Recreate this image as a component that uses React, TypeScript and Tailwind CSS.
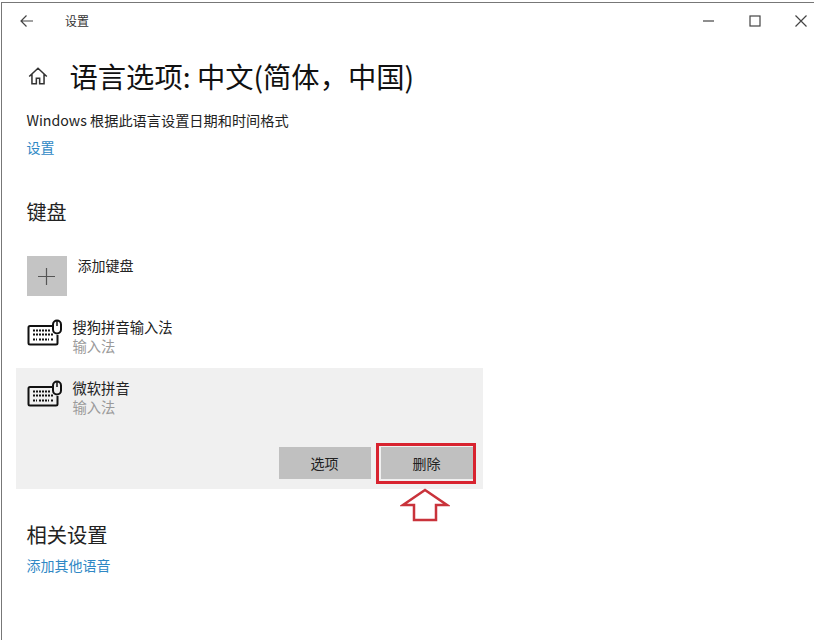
const font = "font-['Noto_Sans_CJK_SC','Noto_Sans',sans-serif]";

function KeyboardIcon() {
  return (
    <svg width="36" height="28" viewBox="0 0 36 28" fill="none" stroke="#111" strokeWidth="2">
      <path d="M25 7H3a1.500 1.500 0 0 0-1.500 1.500V24a1.500 1.500 0 0 0 1.500 1.500h26a1.500 1.500 0 0 0 1.500-1.500v-8" />
      <rect x="26" y="1.500" width="8" height="13" rx="4" />
      <path d="M30 2v5" strokeWidth="1.500" />
      <path d="M6 11.500h17M6 15.500h21M6 20.500h4M12 20.500h10M24 20.500h3" strokeWidth="2" strokeDasharray="2 1" />
    </svg>
  );
}

function ImeRow({ name, selected }: { name: string; selected?: boolean }) {
  return (
    <div className={selected ? "h-[121px] -ml-[11px] w-[467px] pl-[11px] bg-[#f0f0f0]" : "h-[51px]"}>
      <div className={selected ? "flex pt-[10px]" : "flex"}>
        <div className="w-[46px] pt-[2px] pl-[0.500px] shrink-0">
          <KeyboardIcon />
        </div>
        <div>
          <div className="text-[14.300px] leading-[19px] text-[#222]">{name}</div>
          <div className="text-[14.300px] leading-[19px] text-[#9a9a9a]">输入法</div>
        </div>
      </div>
      {selected && (
        <div className="flex justify-end gap-[10px] pr-[10px] mt-[31px]">
          <button className="w-[92px] h-[32px] bg-[#c0c0c0] text-[14px] text-[#222]">选项</button>
          <div className="relative">
            <button className="w-[92px] h-[32px] bg-[#c0c0c0] text-[14px] text-[#222]">删除</button>
            <div className="absolute -left-[5px] -top-[4px] w-[100px] h-[41px] border-[3px] border-[#d8232f]" />
          </div>
        </div>
      )}
    </div>
  );
}

export default function App() {
  return (
    <div className={`${font} relative w-[814px] h-[640px] overflow-hidden bg-white pt-[2px] pl-[1px]`}>
      <div className="h-[638px] border-t-[1.500px] border-l-[1.500px] border-[#777] bg-white">
        {/* title bar */}
        <div className="flex items-center h-[36px] text-[#333]">
          <svg className="ml-[17px]" width="16" height="16" viewBox="0 0 16 16" fill="none" stroke="#444" strokeWidth="1.200">
            <path d="M14 8H2M7.500 2.500 2 8l5.500 5.500" />
          </svg>
          <span className="ml-[30px] text-[12px]">设置</span>
          <div className="ml-auto flex items-center gap-[32px] pr-[6px]">
            <svg width="14" height="14" viewBox="0 0 14 14" stroke="#444" strokeWidth="1.200"><path d="M1 7h11" /></svg>
            <svg width="14" height="14" viewBox="0 0 14 14" fill="none" stroke="#444" strokeWidth="1.200"><rect x="2" y="2" width="10" height="10" /></svg>
            <svg width="14" height="14" viewBox="0 0 14 14" stroke="#444" strokeWidth="1.200"><path d="M1.500 1.500l11 11M12.500 1.500l-11 11" /></svg>
          </div>
        </div>

        <div className="pl-[24.500px]">
          <div className="flex items-center h-[40px] mt-[17px]">
            <svg width="22" height="22" viewBox="0 0 20 20" fill="none" stroke="#333" strokeWidth="1.400">
              <path d="M2 10.500 10 3l8 7.500M4.500 8.500V17h4v-5h3v5h4V8.500" />
            </svg>
            <h1 className="ml-[21px] text-[28.300px] font-normal text-[#111] whitespace-nowrap">语言选项: 中文(简体，中国)</h1>
          </div>

          <div className="mt-[14px] text-[14.200px] leading-[20px] text-[#222]">Windows 根据此语言设置日期和时间格式</div>
          <div className="mt-[7px] text-[14px] leading-[20px] text-[#2f88c5]">设置</div>

          <h2 className="mt-[40px] text-[20px] leading-[30px] font-normal text-[#222]">键盘</h2>

          <div className="flex mt-[29px] h-[40px]">
            <div className="w-[40px] h-[40px] bg-[#c4c4c4] flex items-center justify-center">
              <svg width="17" height="17" viewBox="0 0 17 17" stroke="#555" strokeWidth="1.200"><path d="M8.500 0v17M0 8.500h17" /></svg>
            </div>
            <span className="ml-[11px] -mt-[1px] text-[14px] leading-[20px] text-[#222]">添加键盘</span>
          </div>

          <div className="mt-[21px]">
            <ImeRow name="搜狗拼音输入法" />
            <ImeRow name="微软拼音" selected />
          </div>

          <h2 className="mt-[30px] text-[20.300px] leading-[30px] font-normal text-[#222]">相关设置</h2>
          <div className="mt-[6px] text-[14px] leading-[20px] text-[#2f88c5]">添加其他语音</div>
        </div>
      </div>

      {/* annotation arrow */}
      <svg className="absolute left-[400px] top-[488px]" width="50" height="34" viewBox="0 0 50 34" fill="#fff" stroke="#c9333b" strokeWidth="2.500">
        <path d="M25 2 3 17h11v15h22V17h11z" />
      </svg>
    </div>
  );
}
